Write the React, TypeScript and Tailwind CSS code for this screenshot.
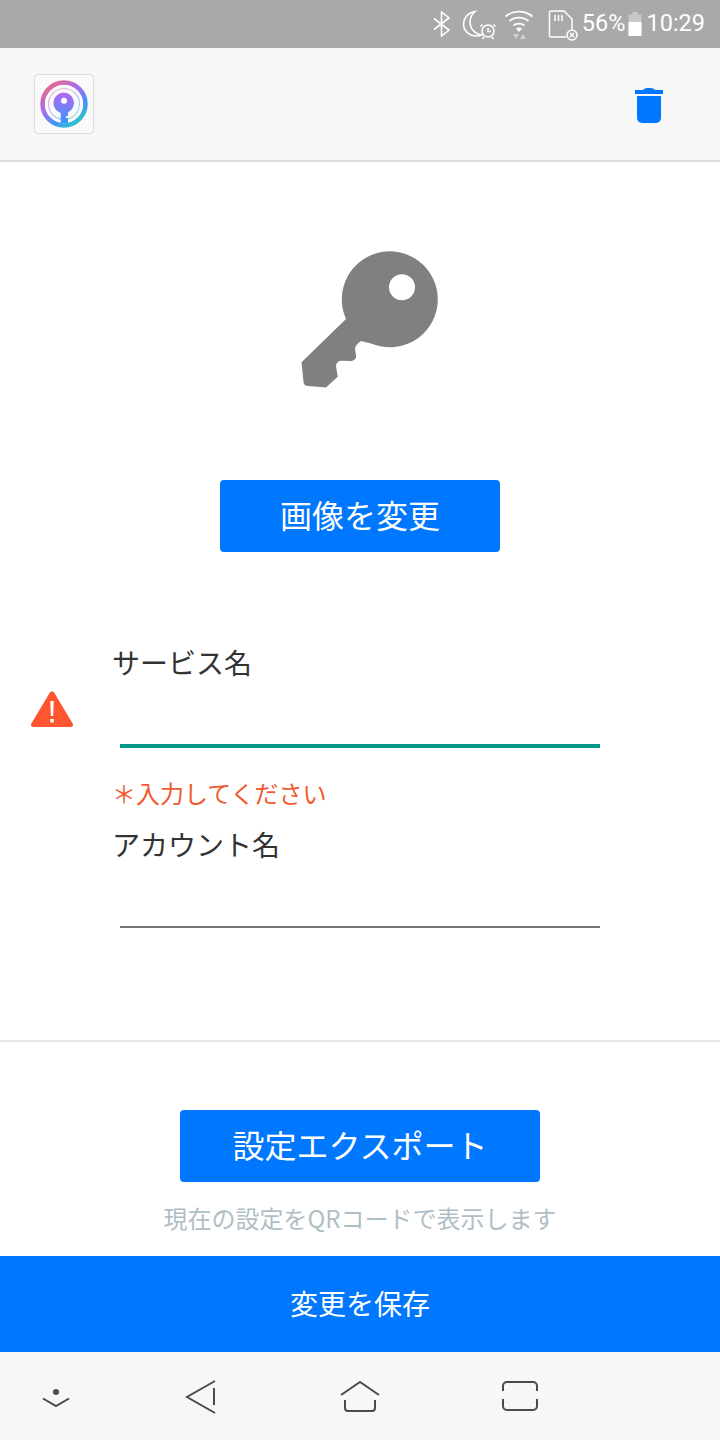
const jp = "font-['Noto_Sans_CJK_JP','Noto_Sans',sans-serif]"

function StatusBar() {
  return (
    <div className="h-12 bg-[#a9a9a9] flex items-center justify-end pr-[15px] text-white">
      <svg width="20" height="26" viewBox="0 0 20 26" fill="none" stroke="white" strokeWidth="1.6" className="mr-[10px]">
        <path d="M2 7.5 17 19 9.500 25V1L17 7 2 18.500" />
      </svg>
      <svg width="36" height="30" viewBox="0 0 36 30" fill="none" stroke="white" strokeWidth="1.6" className="mr-[6px] mt-[2px]">
        <path d="M13 1.500C5 3 1.500 9 1.500 14c0 7 6 12 13 12 2 0 4-.5 5-1C13 24 8 19 8 12c0-4 2-8 5-10.500Z" />
        <circle cx="26" cy="21" r="6" />
        <path d="M26 18v3.500h3M20.500 14.500l-2 2M31.500 14.500l2 2M22 27l-1.500 2M30 27l1.500 2" />
      </svg>
      <svg width="30" height="30" viewBox="0 0 30 30" fill="none" className="mr-[14px]">
        <path d="M1.500 7.500C9 1 21 1 28.500 7.500M5.500 12C11 7.500 19 7.500 24.500 12M9.500 16.500C12.500 14 17.500 14 20.500 16.500" stroke="white" strokeWidth="1.700" />
        <path d="M12 19.500c2-1.500 4-1.500 6 0l-3 3.500Z" fill="white" />
        <path d="M9 25h6l-3 5ZM16 30l3-5 3 5Z" fill="#d0d0d0" />
      </svg>
      <svg width="32" height="32" viewBox="0 0 32 32" fill="none" stroke="white" strokeWidth="1.500" className="mt-[4px] mr-[2px]">
        <path d="M18 27H3a1.500 1.500 0 0 1-1.500-1.500V2.500A1.500 1.500 0 0 1 3 1h13l8 8v10" />
        <path d="M7 5v6M10.500 5v6M14 5v6" />
        <circle cx="24" cy="25" r="5" />
        <path d="m22 23 4 4M26 23l-4 4" />
      </svg>
      <span className="font-['Roboto',sans-serif] text-[23.5px] leading-none">56%</span>
      <svg width="14" height="24" viewBox="0 0 14 24" className="ml-[3px] mr-[4px]">
        <path d="M4.500 0h5v2.500h4V24H.5V2.500h4Z" fill="#c8c8c8" />
        <path d="M.5 10h13v14H.5Z" fill="white" />
      </svg>
      <span className="font-['Roboto',sans-serif] text-[23.5px] leading-none">10:29</span>
    </div>
  )
}

function AppLogo() {
  return (
    <div className="w-[60px] h-[60px] rounded-[4px] border border-[#dcdcdc] bg-[#fafafa] flex items-center justify-center">
      <svg width="48" height="48" viewBox="0 0 48 48" fill="none">
        <defs>
          <linearGradient id="ring" x1="0.1" y1="0" x2="0.8" y2="1">
            <stop offset="0" stopColor="#f26a78" />
            <stop offset="0.4" stopColor="#a86cf0" />
            <stop offset="0.75" stopColor="#3f96fa" />
            <stop offset="1" stopColor="#28d0c0" />
          </linearGradient>
          <linearGradient id="keyFill" x1="0" y1="0" x2="0" y2="1">
            <stop offset="0" stopColor="#b568f2" />
            <stop offset="1" stopColor="#3898fa" />
          </linearGradient>
        </defs>
        <circle cx="24" cy="24" r="21.500" stroke="url(#ring)" strokeWidth="4.500" />
        <circle cx="24" cy="24" r="15.500" stroke="url(#ring)" strokeWidth="1.200" opacity="0.45" />
        <path d="M23.500 12.500a10.500 10.500 0 0 1 4.500 20v3.500h-2v2h2v5h-7.300V33a10.500 10.500 0 0 1 2.800-20.500Z" fill="url(#keyFill)" />
        <circle cx="24" cy="20.700" r="3" fill="white" />
      </svg>
    </div>
  )
}

function Header() {
  return (
    <div className="h-[114px] bg-[#f7f7f7] border-b-2 border-[#dedede] flex items-center justify-between pl-[34px] pr-[57px]">
      <AppLogo />
      <svg width="28" height="38" viewBox="0 0 28 38" className="mt-[-1px]">
        <path d="M0 5h8C9 3.500 11 3 14 3s5 .5 6 2h8v4H0Z" fill="#0077ff" />
        <path d="M2 11h24v22a5 5 0 0 1-5 5H7a5 5 0 0 1-5-5Z" fill="#0077ff" />
      </svg>
    </div>
  )
}

function KeyIcon() {
  return (
    <svg width="180" height="170" viewBox="0 0 180 170" className="ml-[22px]">
      <path
        fill="#808080"
        d="M65 89 20.500 132.300 22.500 152Q23 156 27 156L45 157.500 56.700 146.700 55 136Q55.500 131 60 130.700L71 131Q76 129 75 125L74 119Q74 115 80 111L90 113.500A48 48 0 1 0 65 89Z"
      />
      <circle cx="121" cy="57.300" r="13" fill="white" />
    </svg>
  )
}

function WarningIcon() {
  return (
    <svg width="44" height="38" viewBox="0 0 44 38">
      <path d="M22 1.500c1.200 0 2 .6 2.600 1.700l18 30.300c1 1.800.2 3.500-2 3.500H3.400c-2.200 0-3-1.700-2-3.500l18-30.300C20 2.100 20.800 1.500 22 1.500Z" fill="#ff5530" />
      <path d="M20.300 11h3.400l-.5 15h-2.400ZM20.300 29h3.400v3.500h-3.400Z" fill="white" />
    </svg>
  )
}

function BlueButton({ label, width }: { label: string; width: string }) {
  return (
    <button className={`${width} h-[72px] pb-1 rounded-[4px] bg-[#0077ff] text-white text-[32px] leading-none ${jp}`}>
      {label}
    </button>
  )
}

function NavBar() {
  const stroke = { fill: "none", stroke: "#4a4a4a", strokeWidth: 2 }
  return (
    <div className="h-[88px] bg-[#f7f7f7] flex items-center">
      <svg width="28" height="20" viewBox="0 0 28 20" className="ml-[42px] mt-[3px]">
        <circle cx="14" cy="4" r="3" fill="#4a4a4a" />
        <path d="M1 10.500 14 18 27 10.500" {...stroke} />
      </svg>
      <svg width="32" height="34" viewBox="0 0 32 34" className="ml-[115px] mt-[1px]">
        <path d="M30 1 2 17 30 33M29 8v17" {...stroke} />
      </svg>
      <svg width="40" height="32" viewBox="0 0 40 32" className="ml-[123px] mt-[1px]">
        <path d="M1 14 20 1 39 14M5 19v8a3 3 0 0 0 3 3h24a3 3 0 0 0 3-3v-8" {...stroke} />
      </svg>
      <svg width="36" height="30" viewBox="0 0 36 30" className="ml-[122px]">
        <path d="M1 10V5a4 4 0 0 1 4-4h26a4 4 0 0 1 4 4v5M1 18v7a4 4 0 0 0 4 4h26a4 4 0 0 0 4-4v-7" {...stroke} />
      </svg>
    </div>
  )
}

export default function App() {
  return (
    <div className={`w-[720px] h-[1440px] flex flex-col bg-white ${jp}`}>
      <StatusBar />
      <Header />

      <div className="flex-1 flex flex-col">
        <div className="flex flex-col items-center pt-[68px]">
          <KeyIcon />
          <div className="mt-[80px]">
            <BlueButton label="画像を変更" width="w-[280px]" />
          </div>
        </div>

        {/* form */}
        <div className="mt-[84px] pl-[112px] relative">
          <div className="text-[28px] leading-[40px] text-[#333333] h-[40px] mt-[6px]">サービス名</div>
          <div className="absolute left-[30px] top-[54px]">
            <WarningIcon />
          </div>
          <div className="ml-[8px] w-[480px] h-[66px] border-b-4 border-[#009688]" />
          <div className="text-[24px] leading-[34px] text-[#f1592f] mt-[28px]">＊入力してください</div>
          <div className="text-[28px] leading-[40px] text-[#333333] mt-[14px]">アカウント名</div>
          <div className="ml-[8px] w-[480px] h-[64px] border-b-2 border-[#757575]" />
        </div>

        <div className="mt-[112px] border-t-2 border-[#e6e6e6] flex flex-col items-center">
          <div className="mt-[68px]">
            <BlueButton label="設定エクスポート" width="w-[360px]" />
          </div>
          <div className="mt-[18px] text-[24px] leading-[36px] text-[#b0bec5]">現在の設定をQRコードで表示します</div>
        </div>
      </div>

      <div className="h-24 pb-0.5 bg-[#0077ff] text-white text-[28px] flex items-center justify-center">変更を保存</div>
      <NavBar />
    </div>
  )
}
